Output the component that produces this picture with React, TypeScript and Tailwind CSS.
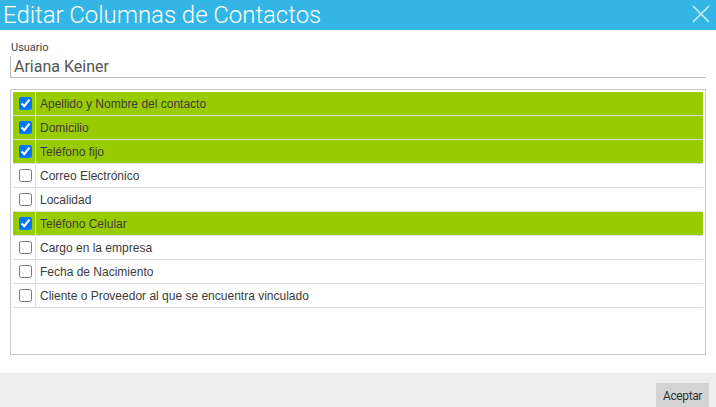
import React from 'react';

const columnas = [
  { label: 'Apellido y Nombre del contacto', checked: true },
  { label: 'Domicilio', checked: true },
  { label: 'Teléfono fijo', checked: true },
  { label: 'Correo Electrónico', checked: false },
  { label: 'Localidad', checked: false },
  { label: 'Teléfono Celular', checked: true },
  { label: 'Cargo en la empresa', checked: false },
  { label: 'Fecha de Nacimiento', checked: false },
  { label: 'Cliente o Proveedor al que se encuentra vinculado', checked: false },
];

const App = () => {
  return (
    <div className="w-[716px] h-[407px] bg-white flex flex-col overflow-hidden font-['Roboto',sans-serif]">
      {/* Header */}
      <div className="h-[30px] bg-[#33b5e5] flex items-center justify-between pl-[3px] pr-[5px] shrink-0">
        <h1 className="text-white text-[24px] font-light leading-none tracking-[-0.05px]">
          Editar Columnas de Contactos
        </h1>
        <svg width="20" height="20" viewBox="0 0 20 20" className="mt-[-2px]">
          <path d="M2 2 L18 18 M18 2 L2 18" stroke="#cdeefa" strokeWidth="1.6" fill="none" />
        </svg>
      </div>

      {/* Body */}
      <div className="flex-1 flex flex-col px-[10px] pt-[11px]">
        <label className="text-[11px] text-[#444] leading-[13px] pl-px">Usuario</label>
        <div className="mt-[2px] h-[22px] w-[696px] border-l border-b border-[#bbb] flex items-center pl-[3px]">
          <span className="text-[16px] text-[#555] leading-none mt-[1px]">Ariana Keiner</span>
        </div>

        {/* Columns list */}
        <div className="mt-[11px] w-[696px] h-[266px] border border-[#c8c8c8] p-[2px]">
          {columnas.map((col, i) => (
            <div
              key={i}
              className={`h-[24px] flex border-b border-[#dcdcdc] ${col.checked ? 'bg-[#99cc00]' : 'bg-white'}`}
            >
              <div className="w-[23px] flex items-center justify-center border-r border-[#dcdcdc]">
                <input type="checkbox" checked={col.checked} readOnly className="w-[13px] h-[13px] m-0 ml-[3px] accent-[#0075ff]" />
              </div>
              <div className="flex items-center pl-[4px] text-[12px] text-[#3c3c3c] font-['Liberation_Sans',Arial,sans-serif]">
                {col.label}
              </div>
            </div>
          ))}
        </div>
      </div>

      {/* Footer */}
      <div className="h-[34px] bg-[#eeeeee] flex justify-end items-start pt-[10px] pr-[7px] shrink-0">
        <button className="h-[26px] w-[53px] bg-[#d4d4d4] text-[#333] text-[12px] tracking-[-0.4px] font-['Roboto',sans-serif] leading-none">
          Aceptar
        </button>
      </div>
    </div>
  );
};

export default App;
